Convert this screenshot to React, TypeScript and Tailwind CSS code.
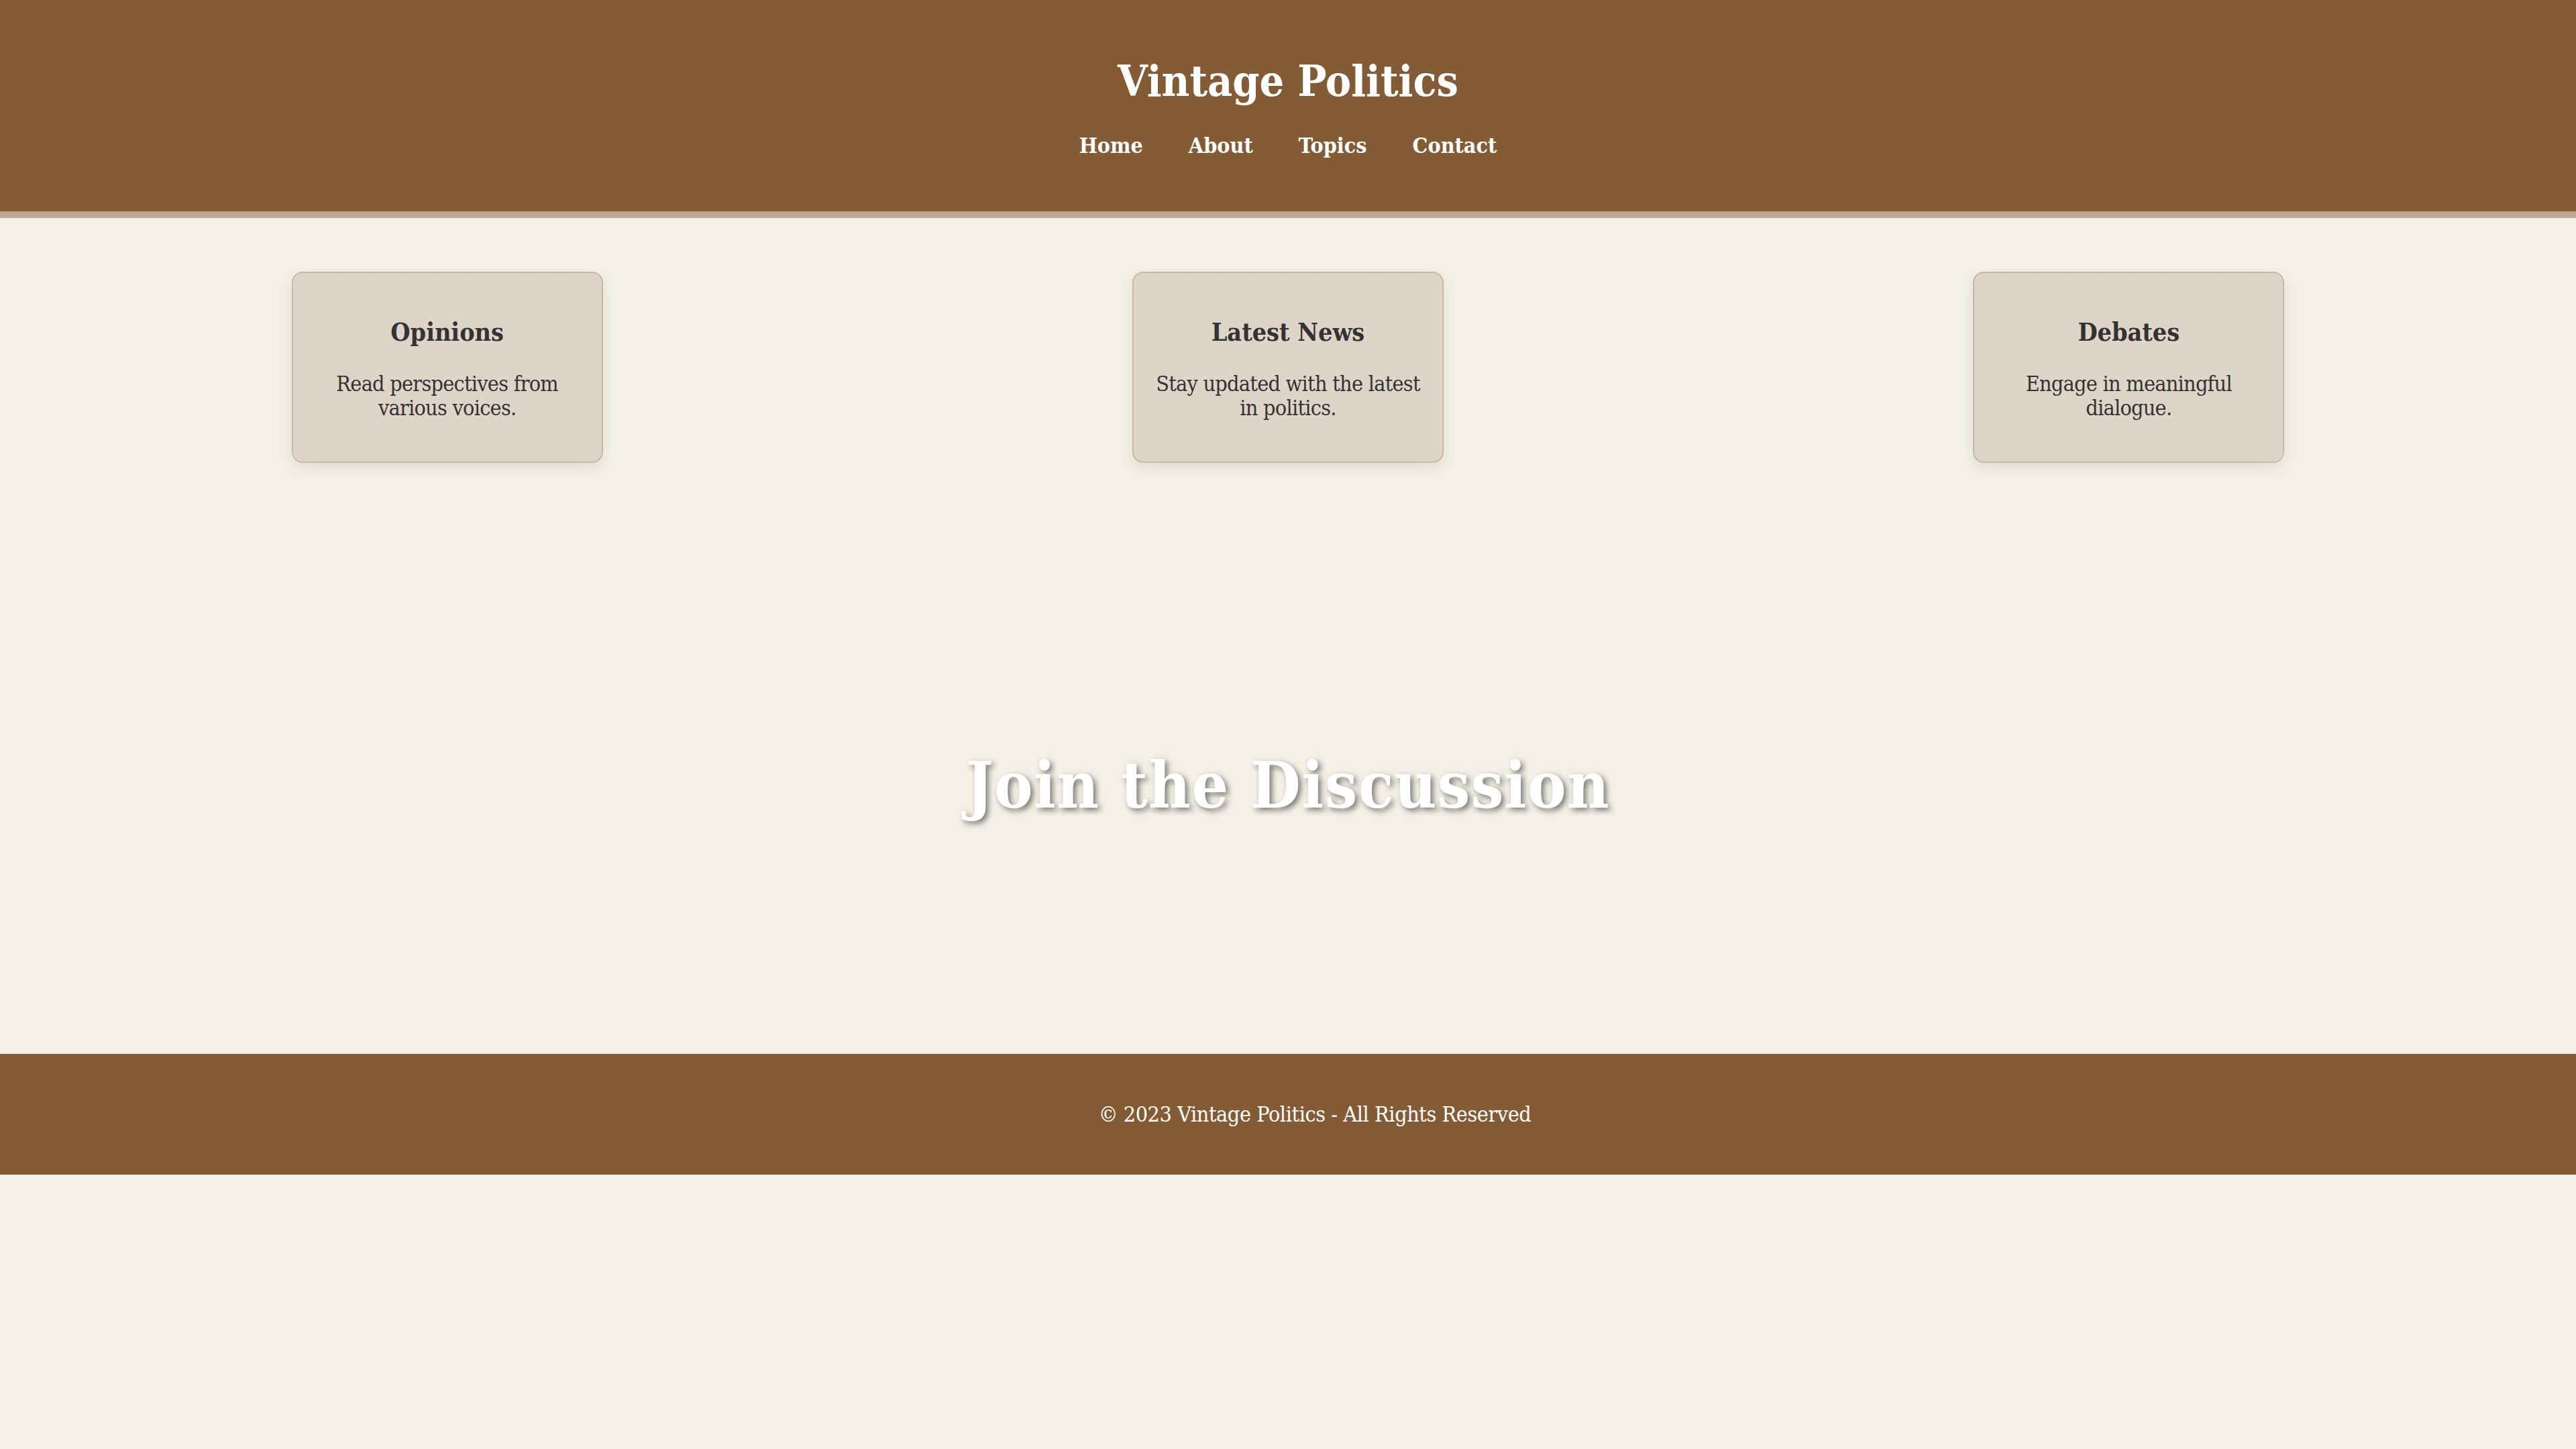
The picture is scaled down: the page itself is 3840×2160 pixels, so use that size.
const cards = [
  { title: 'Opinions', lines: ['Read perspectives from', 'various voices.'] },
  { title: 'Latest News', lines: ['Stay updated with the latest', 'in politics.'] },
  { title: 'Debates', lines: ['Engage in meaningful', 'dialogue.'] },
]

const navLinks = ['Home', 'About', 'Topics', 'Contact']

export default function App() {
  return (
    <div className="min-h-screen bg-[#f3f0e6] font-['DejaVu_Serif_Condensed','DejaVu_Serif',Georgia,serif] font-stretch-condensed text-[#333333]">
      <header className="bg-[#835b34] border-b-[10px] border-[#c0a596] pt-[41px] pb-[80px] text-center text-white">
        <h1 className="mt-[43px] mb-[42px] text-[64px] leading-[73px] font-bold">Vintage Politics</h1>
        <nav className="flex justify-center gap-[68px] text-[32px] leading-[36px] font-bold">
          {navLinks.map((link) => (
            <a key={link} href="#" className="text-white">
              {link}
            </a>
          ))}
        </nav>
      </header>

      <section className="flex justify-around px-[40px] py-[80px]">
        {cards.map((card) => (
          <div
            key={card.title}
            className="w-[464px] px-[30px] py-[30px] rounded-[16px] border-2 border-[#ceb7a2] bg-[#dfd4c8] text-center shadow-[0_8px_20px_rgba(0,0,0,0.08)]"
          >
            <h3 className="mt-[37px] text-[37.4px] leading-[42.5px] font-bold">{card.title}</h3>
            <p className="mt-[37px] mb-[32px] text-[32px] leading-[36.4px] tracking-[-0.7px] whitespace-nowrap">
              {card.lines[0]}
              <br />
              {card.lines[1]}
            </p>
          </div>
        ))}
      </section>

      <section className="h-[801px] flex items-center justify-center">
        <h2 className="text-[96px] leading-[109px] font-bold tracking-[1.4px] text-white [text-shadow:4px_4px_8px_rgba(0,0,0,0.5)]">
          Join the Discussion
        </h2>
      </section>

      <footer className="bg-[#835b34] h-[180px] flex items-center justify-center pl-[120px] pr-[40px] text-white">
        <p className="text-[32px] leading-[36px] tracking-[-0.4px]">© 2023 Vintage Politics - All Rights Reserved</p>
      </footer>
    </div>
  )
}
